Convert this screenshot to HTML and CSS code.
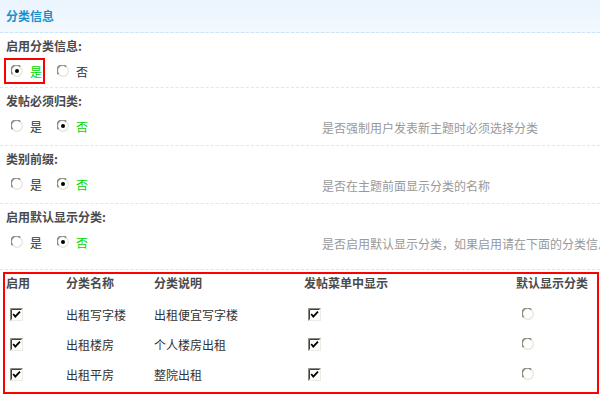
FILE: index.html
```html
<!DOCTYPE html>
<html>
<head>
  <meta charset="utf-8">
  <title>分类信息</title>
  <link rel="stylesheet" href="styles.css">
</head>
<body>
  <svg class="defs" width="0" height="0">
    <symbol id="radio" viewBox="0 0 12 12">
      <circle cx="6" cy="6" r="5.3" fill="#fff" stroke="#e4e4da" stroke-width="1.2"/>
      <path d="M1.6 9.2 A5.2 5.2 0 0 1 9.2 1.6" stroke="#8c8c82" stroke-width="1.6" fill="none"/>
    </symbol>
    <symbol id="radio-on" viewBox="0 0 12 12">
      <circle cx="6" cy="6" r="5.3" fill="#fff" stroke="#e4e4da" stroke-width="1.2"/>
      <path d="M1.6 9.2 A5.2 5.2 0 0 1 9.2 1.6" stroke="#8c8c82" stroke-width="1.6" fill="none"/>
      <circle cx="6" cy="6" r="2" fill="#000"/>
    </symbol>
    <symbol id="check" viewBox="0 0 13 13">
      <rect x="0.5" y="0.5" width="12" height="12" fill="#fff" stroke="#ecece4"/>
      <path d="M0.5 12.5 V0.5 H12.5" stroke="#8a8a80" fill="none"/>
      <path d="M1.5 11.5 V1.5 H11.5" stroke="#404040" fill="none"/>
      <path d="M3.2 6 L5.3 8.6 L10 3.6" stroke="#000" stroke-width="1.8" fill="none"/>
    </symbol>
  </svg>

  <div class="panel">
    <div class="panel-title">分类信息</div>

    <div class="item first">
      <div class="item-label">启用分类信息:</div>
      <div class="item-row">
        <div class="choices">
          <label class="opt marked"><svg class="ico"><use href="#radio-on"/></svg><span class="on">是</span></label>
          <label class="opt"><svg class="ico"><use href="#radio"/></svg><span>否</span></label>
        </div>
      </div>
    </div>

    <div class="item">
      <div class="item-label">发帖必须归类:</div>
      <div class="item-row">
        <div class="choices">
          <label class="opt"><svg class="ico"><use href="#radio"/></svg><span>是</span></label>
          <label class="opt"><svg class="ico"><use href="#radio-on"/></svg><span class="on">否</span></label>
        </div>
        <div class="tip">是否强制用户发表新主题时必须选择分类</div>
      </div>
    </div>

    <div class="item">
      <div class="item-label">类别前缀:</div>
      <div class="item-row">
        <div class="choices">
          <label class="opt"><svg class="ico"><use href="#radio"/></svg><span>是</span></label>
          <label class="opt"><svg class="ico"><use href="#radio-on"/></svg><span class="on">否</span></label>
        </div>
        <div class="tip">是否在主题前面显示分类的名称</div>
      </div>
    </div>

    <div class="item last">
      <div class="item-label">启用默认显示分类:</div>
      <div class="item-row">
        <div class="choices">
          <label class="opt"><svg class="ico"><use href="#radio"/></svg><span>是</span></label>
          <label class="opt"><svg class="ico"><use href="#radio-on"/></svg><span class="on">否</span></label>
        </div>
        <div class="tip">是否启用默认显示分类，如果启用请在下面的分类信息中选择默认显示的分类</div>
      </div>
    </div>

    <div class="types">
      <div class="types-row head">
        <div>启用</div>
        <div>分类名称</div>
        <div>分类说明</div>
        <div>发帖菜单中显示</div>
        <div>默认显示分类</div>
      </div>
      <div class="types-row">
        <div><svg class="box"><use href="#check"/></svg></div>
        <div>出租写字楼</div>
        <div>出租便宜写字楼</div>
        <div><svg class="box"><use href="#check"/></svg></div>
        <div><svg class="ico dot"><use href="#radio"/></svg></div>
      </div>
      <div class="types-row">
        <div><svg class="box"><use href="#check"/></svg></div>
        <div>出租楼房</div>
        <div>个人楼房出租</div>
        <div><svg class="box"><use href="#check"/></svg></div>
        <div><svg class="ico dot"><use href="#radio"/></svg></div>
      </div>
      <div class="types-row">
        <div><svg class="box"><use href="#check"/></svg></div>
        <div>出租平房</div>
        <div>整院出租</div>
        <div><svg class="box"><use href="#check"/></svg></div>
        <div><svg class="ico dot"><use href="#radio"/></svg></div>
      </div>
    </div>
  </div>
</body>
</html>
```

FILE: styles.css
```css
body {
  margin: 0;
  font-family: "Noto Sans CJK SC", "DejaVu Sans", sans-serif;
  font-size: 12px;
  color: #333;
  background: #fff;
  overflow: hidden;
}

.defs {
  position: absolute;
}

.panel {
  width: 600px;
  overflow: hidden;
}

.panel-title {
  height: 32px;
  line-height: 31px;
  padding-left: 6px;
  font-weight: bold;
  color: #1a8fcc;
  background: linear-gradient(#eaf4fd, #f3f9fe);
  border-bottom: 1px dashed #cde4f7;
}

.item {
  padding: 0 0 6px 0;
  border-bottom: 1px dashed #e2e6ea;
}

.item.first {
  padding-bottom: 3px;
}

.item.last {
  padding-bottom: 14px;
  border-bottom-color: #d4e7f7;
}

.item-label {
  height: 25px;
  line-height: 25px;
  padding-left: 6px;
  font-weight: bold;
  color: #4a4a4a;
}

.item-row {
  display: flex;
  align-items: center;
  height: 26px;
  white-space: nowrap;
}

.choices {
  display: flex;
  gap: 5px;
  width: 322px;
  padding-left: 4px;
  box-sizing: border-box;
  flex-shrink: 0;
}

.opt {
  display: inline-flex;
  align-items: center;
  gap: 7px;
  height: 22px;
  padding: 0 1px 0 5px;
  border: 2px solid transparent;
}

.opt.marked {
  border-color: #f00;
}

.on {
  color: #00d800;
}

.ico {
  width: 12px;
  height: 12px;
}

.tip {
  color: #999;
  padding-top: 3px;
}

.types {
  margin: 2px 1px 0 3px;
  border: 2px solid #f00;
  height: 118px;
}

.types-row {
  display: grid;
  grid-template-columns: 60px 88px 150px 212px 1fr;
  height: 30px;
  align-items: center;
}

.types-row > div {
  padding-left: 1px;
}

.types-row.head {
  height: 25px;
  align-items: start;
  line-height: 18px;
  font-weight: bold;
  color: #4a4a4a;
}

.box {
  width: 13px;
  height: 13px;
  margin-left: 4px;
  display: block;
}

.dot {
  display: block;
  margin-left: 6px;
}
```
